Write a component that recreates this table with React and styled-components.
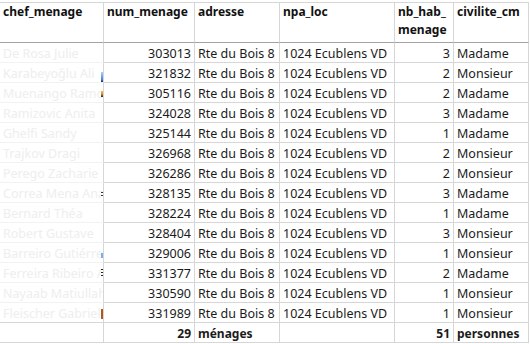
import React from "react";
import styled, { createGlobalStyle } from "styled-components";

const Global = createGlobalStyle`
  html, body { margin: 0; padding: 0; background: #ffffff; }
  body { font-family: "Noto Sans", "Liberation Sans", Arial, sans-serif; color: #1b1b1b; }
`;

const COLS = "104px 91px 85px 115px 59px 75px";

const Sheet = styled.div`
  padding-top: 2px;
  width: 529px;
`;

const Grid = styled.div`
  display: grid;
  grid-template-columns: ${COLS};
  border-top: 1px solid #d6d6d6;
`;

const HeadCell = styled.div`
  height: 39px;
  padding: 0 3px;
  font-size: 12px;
  line-height: 18px;
  font-weight: bold;
  color: #111;
  border-right: 1px solid #d6d6d6;
  border-bottom: 1px solid #a3a3a3;
  overflow: hidden;
`;

const Cell = styled.div`
  position: relative;
  box-sizing: border-box;
  height: 20px;
  padding: 0 3px 1px;
  display: flex;
  align-items: flex-end;
  justify-content: ${(p) => (p.$num ? "flex-end" : "flex-start")};
  font-size: ${(p) => (p.$bold ? "12px" : "12.5px")};
  line-height: 15px;
  font-weight: ${(p) => (p.$bold ? "bold" : "normal")};
  color: ${(p) => (p.$faint ? "#eeeeee" : "#1b1b1b")};
  border-right: 1px solid #d6d6d6;
  border-bottom: 1px solid ${(p) => (p.$softLine ? "#f2f2f2" : "#d6d6d6")};
  white-space: nowrap;
  overflow: ${(p) => (p.$clip ? "hidden" : "visible")};
`;

const Mark = styled.span`
  position: absolute;
  right: 0;
  top: ${(p) => p.$top}px;
  width: 2px;
  height: ${(p) => p.$h}px;
  background: ${(p) => p.$bg};
`;

const rows = [
  ["De Rosa Julie", "303013", 3, "Madame"],
  ["Karabeyoğlu Ali", "321832", 2, "Monsieur", { top: 9, h: 10, bg: "linear-gradient(#a9d0ff, #3d7fd9 80%, #222 100%)" }],
  ["Muenango Ramos", "305116", 2, "Madame", { top: 8, h: 6, bg: "linear-gradient(#f3c23a, #e08a1c 50%, #222 100%)" }],
  ["Ramizovic Anita", "324028", 3, "Madame"],
  ["Ghelfi Sandy", "325144", 1, "Madame"],
  ["Trajkov Dragi", "326968", 2, "Monsieur"],
  ["Perego Zacharie", "326286", 2, "Monsieur"],
  ["Correa Mena Ana", "328135", 3, "Madame", { top: 9, h: 6, bg: "repeating-linear-gradient(#333 0 1px, #fff 1px 3px)" }],
  ["Bernard Théa", "328224", 1, "Madame"],
  ["Robert Gustave", "328404", 3, "Monsieur"],
  ["Barreiro Gutiérrez", "329006", 1, "Monsieur", { top: 10, h: 5, bg: "#6fb2f0" }],
  ["Ferreira Ribeiro Ana", "331377", 2, "Madame", { top: 6, h: 7, bg: "repeating-linear-gradient(#222 0 1px, #fff 1px 3px)" }],
  ["Nayaab Matiullah", "330590", 1, "Monsieur"],
  ["Fleischer Gabriel", "331989", 1, "Monsieur", { top: 6, h: 10, bg: "#b4551e" }],
];

export default function App() {
  return (
    <>
      <Global />
      <Sheet>
        <Grid>
          <HeadCell>chef_menage</HeadCell>
          <HeadCell>num_menage</HeadCell>
          <HeadCell>adresse</HeadCell>
          <HeadCell>npa_loc</HeadCell>
          <HeadCell>
            nb_hab_<wbr />menage
          </HeadCell>
          <HeadCell>civilite_cm</HeadCell>
          {rows.map(([name, num, nb, civ, mark], i) => (
            <React.Fragment key={num}>
              <Cell $faint $softLine={i < rows.length - 1} $clip>
                {name}
                {mark && <Mark $top={mark.top} $h={mark.h} $bg={mark.bg} />}
              </Cell>
              <Cell $num>{num}</Cell>
              <Cell>Rte du Bois 8</Cell>
              <Cell>1024 Ecublens VD</Cell>
              <Cell $num>{nb}</Cell>
              <Cell>{civ}</Cell>
            </React.Fragment>
          ))}
          <Cell />
          <Cell $num $bold>29</Cell>
          <Cell $bold>ménages</Cell>
          <Cell />
          <Cell $num $bold>51</Cell>
          <Cell $bold>personnes</Cell>
        </Grid>
      </Sheet>
    </>
  );
}
